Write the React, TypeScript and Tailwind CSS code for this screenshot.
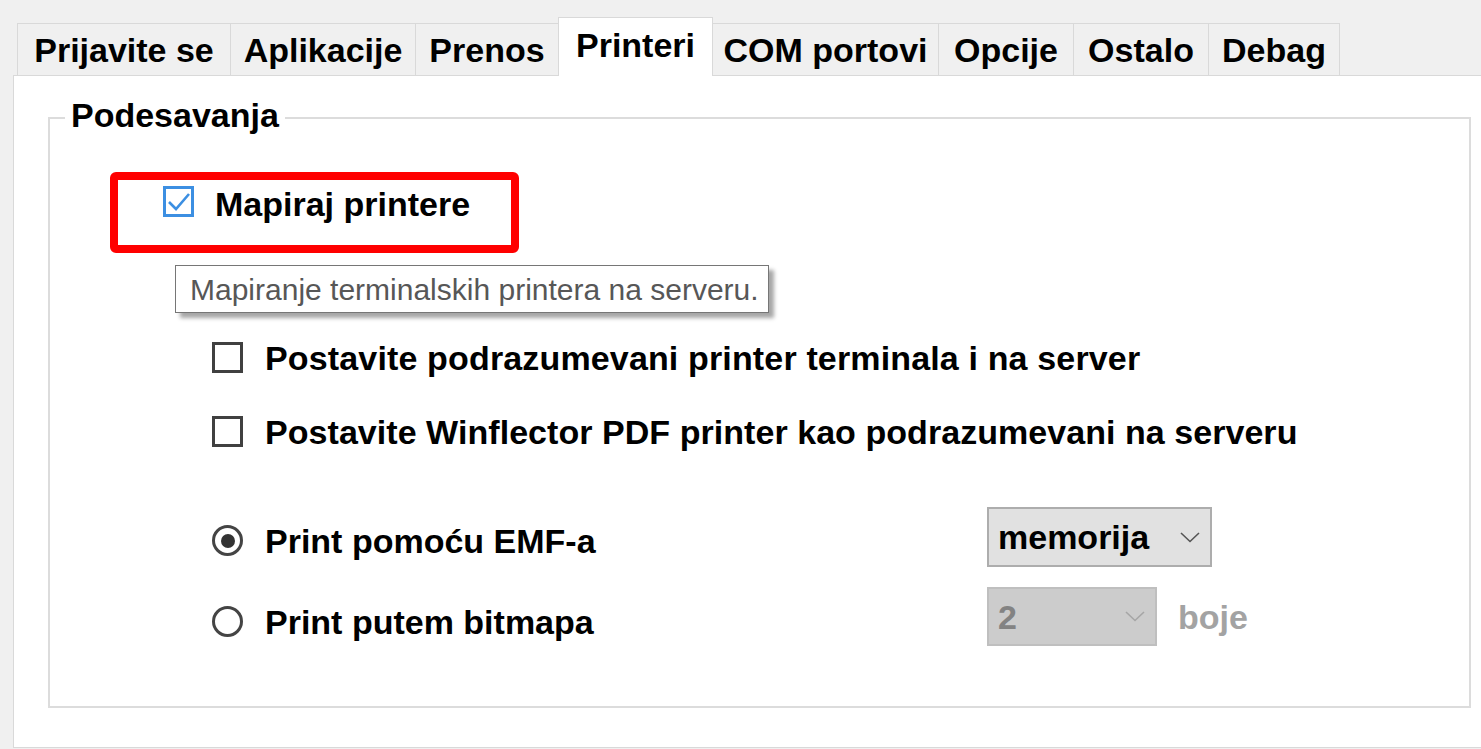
import React from "react";

const font = { fontFamily: '"Liberation Sans", Arial, sans-serif' };

function Tab({ label, width, active, noLeft, right }: { label: string; width: number; active?: boolean; noLeft?: boolean; right?: boolean }) {
  if (active) {
    return (
      <div
        className="relative z-10 -mb-px flex h-[59px] shrink-0 justify-center border-l border-r border-t border-[#d9d9d9] bg-white pt-[10px] text-[34px] font-bold leading-none text-black"
        style={{ width }}
      >
        {label}
      </div>
    );
  }
  return (
    <div
      className={
        "flex h-[52px] shrink-0 justify-center border-t border-[#d9d9d9] bg-[#f0f0f0] pt-[9px] text-[34px] font-bold leading-none text-black " +
        (noLeft ? "" : "border-l ") +
        (right ? "border-r" : "")
      }
      style={{ width }}
    >
      {label}
    </div>
  );
}

function CheckBox({ checked }: { checked?: boolean }) {
  if (checked) {
    return (
      <div className="h-[31px] w-[31px] shrink-0 border-[3px] border-[#3c8fe2] bg-white">
        <svg width="25" height="25" viewBox="0 0 25 25" className="block">
          <polyline points="3,13 10,20 23,5" fill="none" stroke="#3c8fe2" strokeWidth="2.6" />
        </svg>
      </div>
    );
  }
  return <div className="h-[31px] w-[31px] shrink-0 border-[3px] border-[#404040] bg-white" />;
}

function Radio({ checked }: { checked?: boolean }) {
  return (
    <div className="flex h-[31px] w-[31px] shrink-0 items-center justify-center rounded-full border-[3px] border-[#444] bg-white">
      {checked && <div className="h-[14px] w-[14px] rounded-full bg-[#333]" />}
    </div>
  );
}

function Chevron({ color }: { color: string }) {
  return (
    <svg width="20" height="11" viewBox="0 0 20 11" className="block">
      <polyline points="1,1 10,9.5 19,1" fill="none" stroke={color} strokeWidth="1.6" />
    </svg>
  );
}

export default function App() {
  return (
    <div className="relative h-[749px] w-[1481px] overflow-hidden bg-[#f0f0f0]" style={font}>
      <div className="flex h-[75px] items-end pl-[17px]">
        <Tab label="Prijavite se" width={213} />
        <Tab label="Aplikacije" width={185} />
        <Tab label="Prenos" width={143} />
        <Tab label="Printeri" width={155} active />
        <Tab label="COM portovi" width={225} noLeft />
        <Tab label="Opcije" width={135} />
        <Tab label="Ostalo" width={135} />
        <Tab label="Debag" width={132} right />
      </div>
      <div className="ml-[13px] h-[673px] w-[1468px] border-b border-l border-t border-[#d9d9d9] bg-white">
        <fieldset className="ml-[34px] mt-[22px] h-[610px] w-[1423px] border-2 border-[#dcdcdc] p-0">
          <legend className="ml-[15px] px-[6px] pb-[6px] text-[34px] font-bold leading-none text-black">Podesavanja</legend>
          <div className="ml-[60px] mt-[34px] h-[81px] w-[409px] rounded-[6px] border-[8px] border-[#ff0000]">
            <div className="flex items-start pl-[45px] pt-[6px]">
              <CheckBox checked />
              <span className="ml-[21px] mt-px text-[34px] font-bold leading-none text-black">Mapiraj printere</span>
            </div>
          </div>
          <div className="ml-[162px] mt-[89px] flex h-[31px] items-center gap-[22px]">
            <CheckBox />
            <span className="whitespace-nowrap text-[34px] font-bold leading-none tracking-[0.15px] text-black">
              Postavite podrazumevani printer terminala i na server
            </span>
          </div>
          <div className="ml-[162px] mt-[43px] flex h-[31px] items-center gap-[22px]">
            <CheckBox />
            <span className="whitespace-nowrap text-[34px] font-bold leading-none tracking-[0.05px] text-black">
              Postavite Winflector PDF printer kao podrazumevani na serveru
            </span>
          </div>
          <div className="ml-[162px] mt-[60px] flex">
            <div className="w-[775px] shrink-0 pt-[18px]">
              <div className="flex h-[31px] items-center gap-[22px]">
                <Radio checked />
                <span className="whitespace-nowrap text-[34px] font-bold leading-none text-black">Print pomoću EMF-a</span>
              </div>
              <div className="mt-[50px] flex h-[31px] items-center gap-[22px]">
                <Radio />
                <span className="whitespace-nowrap text-[34px] font-bold leading-none text-black">Print putem bitmapa</span>
              </div>
            </div>
            <div className="flex flex-col">
              <div className="flex h-[60px] w-[225px] items-center justify-between border-2 border-[#adadad] bg-[#e1e1e1] pl-[9px] pr-[10px]">
                <span className="text-[34px] font-bold leading-none text-black">memorija</span>
                <Chevron color="#555555" />
              </div>
              <div className="mt-[20px] flex items-center">
                <div className="flex h-[59px] w-[170px] items-center justify-between border-2 border-[#bfbfbf] bg-[#cccccc] pl-[9px] pr-[10px]">
                  <span className="text-[34px] font-bold leading-none text-[#838383]">2</span>
                  <Chevron color="#a6a6a6" />
                </div>
                <span className="ml-[21px] text-[34px] font-bold leading-none text-[#a3a3a3]">boje</span>
              </div>
            </div>
          </div>
        </fieldset>
      </div>
      <div className="absolute left-[175px] top-[265px] h-[48px] w-[594px] border border-[#767676] bg-white pl-[14px] pt-[9px] shadow-[5px_5px_4px_rgba(0,0,0,0.35)]">
        <span className="whitespace-nowrap text-[30px] leading-none text-[#575757]">Mapiranje terminalskih printera na serveru.</span>
      </div>
    </div>
  );
}
